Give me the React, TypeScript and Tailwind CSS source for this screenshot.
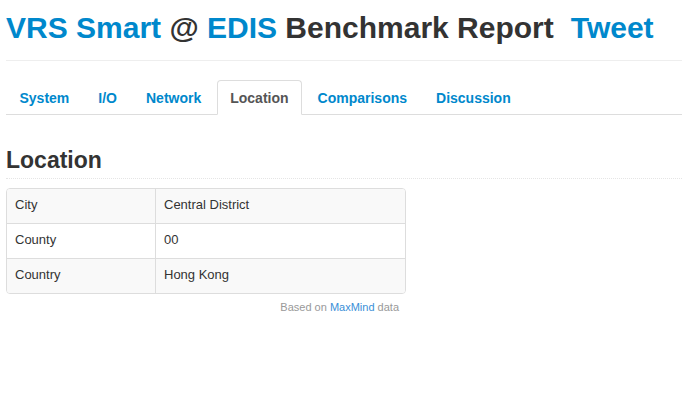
import React from "react";

const tabs = ["System", "I/O", "Network", "Location", "Comparisons", "Discussion"];
const rows: [string, string][] = [
  ["City", "Central District"],
  ["County", "00"],
  ["Country", "Hong Kong"],
];

export default function App() {
  return (
    <div className="min-h-[404px] bg-white pl-[6px] font-['Liberation_Sans',Arial,Helvetica,sans-serif] text-[#333]">
      <h1 className="pt-[10px] text-[30px] leading-[36px] font-bold whitespace-nowrap">
        <a className="text-[#0088cc]">VRS Smart</a> @ <a className="text-[#0088cc]">EDIS</a> Benchmark Report
        <a className="ml-[17px] text-[#0088cc]">Tweet</a>
      </h1>
      <div className="mt-[14px] border-t border-[#eeeeee]" />

      <ul className="mt-[19px] flex border-b border-[#dddddd]">
        {tabs.map((t) => {
          const active = t === "Location";
          return (
            <li key={t} className="-mb-px mr-[2px]">
              <a
                className={
                  active
                    ? "block rounded-t-[4px] border border-[#dddddd] border-b-white bg-white px-[12.5px] pt-[7px] pb-[6px] text-[14px] leading-[20px] font-bold text-[#555555]"
                    : "block rounded-t-[4px] border border-transparent px-[12.5px] pt-[7px] pb-[6px] text-[14px] leading-[20px] font-bold text-[#0088cc]"
                }
              >
                {t}
              </a>
            </li>
          );
        })}
      </ul>

      <h2 className="mt-[31px] border-b border-dotted border-[#e5e5e5] pb-[4px] text-[23px] leading-[28px] font-bold text-[#333]">
        Location
      </h2>

      <div className="mt-[9px] w-[400px]">
        <div className="overflow-hidden rounded-[4px] border border-[#dddddd] text-[13px] leading-[18px] text-[#333]">
          {rows.map(([k, v], i) => (
            <div
              key={k}
              className={
                "flex " +
                (i > 0 ? "h-[35px] border-t border-[#dddddd] " : "h-[34px] ") +
                (i % 2 === 0 ? "bg-[#f9f9f9]" : "bg-white")
              }
            >
              <div className="flex w-[149px] items-center border-r border-[#dddddd] px-[8px] pb-[2px]">{k}</div>
              <div className="flex flex-1 items-center px-[8px] pb-[2px]">{v}</div>
            </div>
          ))}
        </div>
        <div className="mt-[6px] pr-[7px] text-right text-[11px] leading-[15px] text-[#999999]">
          Based on <a className="text-[#3a8fd8]">MaxMind</a> data
        </div>
      </div>
    </div>
  );
}
